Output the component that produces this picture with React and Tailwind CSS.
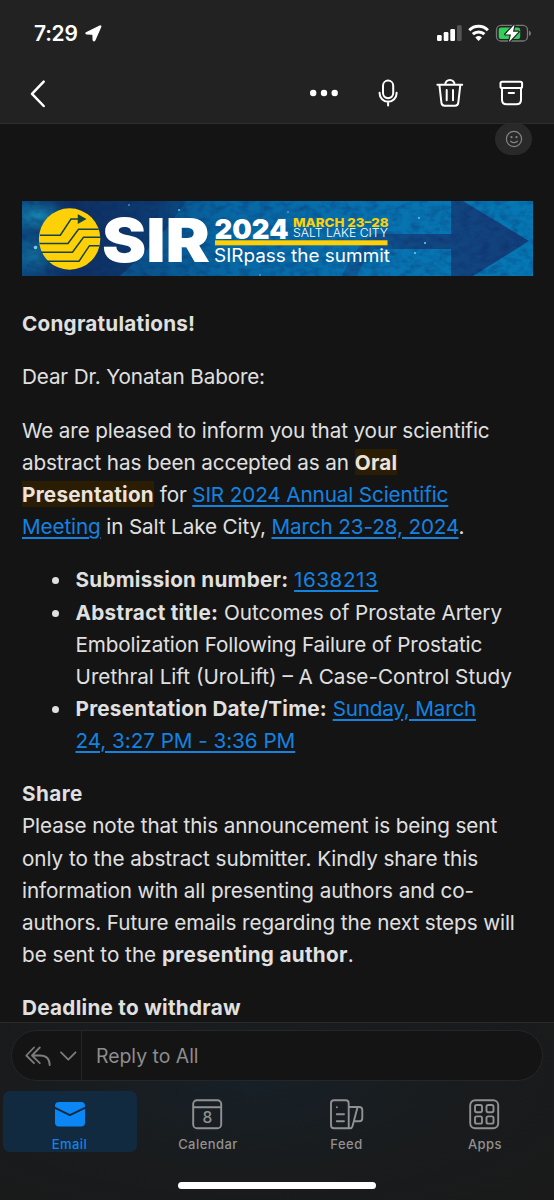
const LINK = 'text-[#1383e2] underline decoration-[1.5px] underline-offset-[3px] [text-decoration-skip-ink:auto]';

function Line({ children, t = 'tracking-[-0.1px]' }) {
  return <span className={`block h-[32.1px] whitespace-nowrap ${t}`}>{children}</span>;
}

function Link({ children, t = '' }) {
  return <a className={`${LINK} ${t}`}>{children}</a>;
}

function Bold({ children, t = 'tracking-[0.24px]' }) {
  return <b className={`font-bold ${t}`}>{children}</b>;
}

function Mark({ children }) {
  return <b className="bg-[#2b1c04] py-[0.5px] font-bold tracking-[0.26px] text-[#ece4dc]">{children}</b>;
}

function StatusBar() {
  return (
    <div className="flex h-[65px] items-center justify-between pl-[34px] pr-[22px]">
      <div className="flex items-center gap-[7px] pt-[2px] text-white">
        <span className="text-[21px] font-semibold leading-none tracking-[-0.25px]">7:29</span>
        <svg className="h-[17px] w-[17px]" viewBox="0 0 18 18">
          <path d="M1.3 8.1 15.7 1.1 Q17.3.5 16.6 2.2L10.3 16.4Q9.2 17.6 8.6 16L8.4 9.7 2 9.4Q.3 9 1.3 8.1Z" fill="#fff" stroke="#fff" strokeWidth="1.2" strokeLinejoin="round" />
        </svg>
      </div>
      <svg className="h-[20px] w-[96px]" viewBox="436 23 96 20">
        <rect x="437" y="35" width="4.7" height="6" rx="1.3" fill="#fff" />
        <rect x="443.7" y="32" width="4.7" height="9" rx="1.3" fill="#fff" />
        <rect x="450.3" y="29" width="4.7" height="12" rx="1.3" fill="#fff" />
        <rect x="457" y="25.3" width="4.7" height="15.7" rx="1.3" fill="#555" />
        <path d="M469.3 30.2a13.2 13.2 0 0 1 18.6 0M472.8 34.2a8.4 8.4 0 0 1 11.6 0" fill="none" stroke="#fff" strokeWidth="3" />
        <path d="M475.3 37.4Q478.6 34.6 481.9 37.4L478.6 41Z" fill="#fff" />
        <rect x="496.5" y="25.4" width="31" height="15.6" rx="4.6" fill="none" stroke="#777" strokeWidth="1.3" />
        <rect x="498.7" y="27.6" width="21.5" height="11.3" rx="2.5" fill="#30d158" />
        <path d="M529 30.7q2 .6 2 2.6t-2 2.6Z" fill="#777" />
        <path d="M514.5 24.5 505.3 34.4H511L509 42 518.6 31.8H513Z" fill="#fff" stroke="#222" strokeWidth="2.4" strokeLinejoin="round" paintOrder="stroke" />
      </svg>
    </div>
  );
}

function Toolbar() {
  return (
    <div className="flex h-[56px] items-center justify-between pl-[26px] pr-[26px]">
      <svg className="h-[32px] w-[24px]" viewBox="26 77 24 32" fill="none" stroke="#fff" strokeWidth="2.5" strokeLinecap="round" strokeLinejoin="round">
        <path d="M43.7 81.7 32 93.8 43.7 106" />
      </svg>
      <svg className="h-[32px] w-[220px]" viewBox="308 77 220 32" fill="none" stroke="#fff" strokeWidth="2" strokeLinecap="round" strokeLinejoin="round">
        <g fill="#fff" stroke="none">
          <circle cx="313.2" cy="93" r="3.2" />
          <circle cx="324" cy="93" r="3.2" />
          <circle cx="334.7" cy="93" r="3.2" />
        </g>
        <rect x="383" y="80.6" width="10.2" height="17.6" rx="5.1" />
        <path d="M379.6 92.8v.5a8.4 8.4 0 0 0 17 0v-.5M388.1 101.5v4" />
        <path d="M437.4 84.8h24.8M445.3 84.5a4.6 4.6 0 0 1 9.2 0M439.4 85l2 17.7q.3 3 3.2 3h10.5q2.9 0 3.2-3l2-17.7M446.7 90v10.3M453 90v10.3" />
        <rect x="500.5" y="81.8" width="21.6" height="6.3" rx="1.7" />
        <path d="M502 88.2v11.5q0 4.6 4.6 4.6h9.8q4.6 0 4.6-4.6V88.2M508.7 93h5.3" />
      </svg>
    </div>
  );
}

function Banner() {
  return (
    <svg className="block h-[75px] w-[511px]" viewBox="22 201 511 75" fontFamily="Inter, sans-serif">
      <defs>
        <linearGradient id="sea" x1="0" x2="1">
          <stop offset="0" stopColor="#0a4a7f" />
          <stop offset=".1" stopColor="#102f61" />
          <stop offset=".26" stopColor="#0c3c71" />
          <stop offset=".4" stopColor="#075c97" />
          <stop offset=".7" stopColor="#0870ac" />
          <stop offset="1" stopColor="#057ab4" />
        </linearGradient>
        <radialGradient id="glow">
          <stop offset="0" stopColor="#1a9cc4" stopOpacity=".75" />
          <stop offset="1" stopColor="#1a9cc4" stopOpacity="0" />
        </radialGradient>
        <linearGradient id="shaft" x1="0" x2="1">
          <stop offset="0" stopColor="#16306a" stopOpacity=".3" />
          <stop offset=".4" stopColor="#16306a" stopOpacity=".65" />
          <stop offset="1" stopColor="#162c66" stopOpacity=".75" />
        </linearGradient>
        <filter id="grain" x="0" y="0" width="1" height="1" colorInterpolationFilters="sRGB">
          <feTurbulence type="fractalNoise" baseFrequency=".1 .16" numOctaves="3" seed="4" />
          <feColorMatrix values="0 0 0 0 .05  0 0 0 0 .13  0 0 0 0 .36  2.2 0 0 0 -.9" />
        </filter>
      </defs>
      <rect x="22" y="201" width="511" height="75" fill="url(#sea)" />
      <path d="M186 201H533V276H120Q160 240 186 201Z" fill="#0878b4" opacity=".42" />
      <ellipse cx="38" cy="216" rx="30" ry="17" fill="url(#glow)" />
      <ellipse cx="34" cy="255" rx="24" ry="22" fill="url(#glow)" opacity=".6" />
      <path d="M374 234H451V201H463L529 241 473 276H451V249H374Q363 261 357 276H342Q356 244 374 234Z" fill="url(#shaft)" />
      <rect x="22" y="201" width="511" height="75" filter="url(#grain)" opacity=".35" />
      <g fill="#73d0eb">
        <circle cx="35.5" cy="247.5" r="1.8" /><circle cx="51" cy="262" r="1" /><circle cx="129" cy="205" r=".8" />
        <circle cx="179" cy="210" r=".9" /><circle cx="419" cy="218" r=".9" /><circle cx="425" cy="243" r="1" />
        <circle cx="415" cy="253" r="1" /><circle cx="288" cy="212" r=".8" /><circle cx="260" cy="275" r=".8" />
      </g>
      <circle cx="69.6" cy="239" r="30.7" fill="#fed007" />
      <g fill="none" stroke="#17433f" strokeWidth="1.5">
        <path d="M40 235.2H60.3L71 219H79M39.5 243.5H68L78.5 229.2H98.5M41 252.3H72.5L83.5 237.3H100.3M47 261.2H79L89.5 245.7H99.5" />
        <path d="M78.5 215.5 85 219 78.5 222.7Z" fill="#17433f" />
      </g>
      <g fill="#fff">
        <text x="102" y="262.3" fontSize="61" fontWeight="900" textLength="108" lengthAdjust="spacingAndGlyphs">SIR</text>
        <text x="214.5" y="239" fontSize="27.8" fontWeight="900" textLength="74" lengthAdjust="spacingAndGlyphs">2024</text>
        <text x="293" y="236.7" fontSize="11.8" fontWeight="300" textLength="95" lengthAdjust="spacingAndGlyphs">SALT LAKE CITY</text>
        <text x="214" y="262" fontSize="18.2" fontWeight="400" textLength="176" lengthAdjust="spacingAndGlyphs">SIRpass the summit</text>
      </g>
      <text x="293" y="227" fontSize="12.4" fontWeight="800" fill="#fed007" textLength="95.5" lengthAdjust="spacingAndGlyphs">MARCH 23–28</text>
      <rect x="215" y="240.3" width="172.5" height="5" fill="#fed007" />
    </svg>
  );
}

function Message() {
  return (
    <div className="flex flex-col gap-[21.4px] text-[20.7px] leading-[32.1px] text-[#e0e0e0]">
      <p><Line><Bold>Congratulations!</Bold></Line></p>
      <p><Line t="tracking-[-0.15px]">Dear Dr. Yonatan Babore:</Line></p>
      <p>
        <Line t="tracking-[-0.12px]">We are pleased to inform you that your scientific</Line>
        <Line t="tracking-[-0.11px]">abstract has been accepted as an <Mark>Oral</Mark></Line>
        <Line t="tracking-[-0.12px]"><Mark>Presentation</Mark> for <Link>SIR 2024 Annual Scientific</Link></Line>
        <Line t="tracking-[-0.13px]"><Link>Meeting</Link> in Salt Lake City, <Link>March 23-28, 2024</Link>.</Line>
      </p>
      <ul className="flex flex-col pl-[53.5px]">
        <Item><Line><Bold>Submission number:</Bold> <Link t="tracking-[0.5px]">1638213</Link></Line></Item>
        <Item>
          <Line t="tracking-[-0.05px]"><Bold t="tracking-[0.31px]">Abstract title:</Bold> Outcomes of Prostate Artery</Line>
          <Line t="tracking-[-0.13px]">Embolization Following Failure of Prostatic</Line>
          <Line t="tracking-[0px]">Urethral Lift (UroLift) – A Case-Control Study</Line>
        </Item>
        <Item>
          <Line t="tracking-[-0.2px]"><Bold>Presentation Date/Time:</Bold> <Link>Sunday, March</Link></Line>
          <Line t="tracking-[-0.05px]"><Link>24, 3:27 PM - 3:36 PM</Link></Line>
        </Item>
      </ul>
      <p>
        <Line><Bold t="tracking-[0.4px]">Share</Bold></Line>
        <Line>Please note that this announcement is being sent</Line>
        <Line t="tracking-[-0.05px]">only to the abstract submitter. Kindly share this</Line>
        <Line>information with all presenting authors and co-</Line>
        <Line>authors. Future emails regarding the next steps will</Line>
        <Line t="tracking-[0px]">be sent to the <Bold t="tracking-[0.3px]">presenting author</Bold>.</Line>
      </p>
      <p><Line><Bold t="tracking-[0.28px]">Deadline to withdraw</Bold></Line></p>
    </div>
  );
}

function Item({ children }) {
  return (
    <li className="relative">
      <span className="absolute -left-[23.5px] top-[13px] h-[7px] w-[7px] rounded-full bg-[#e0e0e0]" />
      {children}
    </li>
  );
}

function Tab({ label, active, children }) {
  return (
    <div className={`flex h-[61px] w-[134px] flex-col items-center rounded-[7px] pt-[7px] ${active ? 'bg-[#122a40] text-[#1683e4]' : 'text-[#919191]'}`}>
      <svg className="mr-[2px] h-[34px] w-[36px] shrink-0" viewBox="0 0 36 34" fill="none" stroke="currentColor" strokeWidth="1.9" strokeLinecap="round" strokeLinejoin="round">{children}</svg>
      <span className="mt-[3px] shrink-0 text-[13px] font-medium leading-[18px] tracking-[0.45px]">{label}</span>
    </div>
  );
}

function Footer() {
  return (
    <footer className="flex h-[178px] shrink-0 flex-col border-t border-[#2a2a2a] bg-[radial-gradient(ellipse_at_45%_35%,#172027_0%,#191b1c_55%,#1a1a1a_100%)]">
      <div className="mx-[11px] mt-[7px] flex h-[51px] shrink-0 items-center rounded-full border border-[#242627] bg-[#141414]">
        <svg className="h-[49px] w-[69px] shrink-0" viewBox="12 1031 69 49" fill="none" stroke="#7c7c7c" strokeWidth="1.8" strokeLinecap="round" strokeLinejoin="round">
          <path d="M34 1047.5 26.3 1055.5 34 1063.2M39.8 1047.5 32 1055.5 39.8 1063.2M32.5 1055.5H40Q49.7 1055.5 49.7 1065.2" />
          <path d="M61 1052.3 68.3 1059.7 75.5 1052.3" />
        </svg>
        <div className="h-full w-px bg-[#242627]" />
        <span className="ml-[14px] pt-[2px] text-[19.4px] leading-none text-[#8d8d8d]">Reply to All</span>
      </div>
      <div className="mt-[10px] flex shrink-0 gap-[4.5px] pl-[2.5px]">
        <Tab label="Email" active>
          <rect x="4" y="4" width="30" height="24.5" rx="4" fill="#0b86f5" stroke="none" />
          <path d="M4 9.8 18.9 17.1 34 9.8" stroke="#122a40" strokeWidth="2" />
        </Tab>
        <Tab label="Calendar">
          <rect x="4.2" y="2.3" width="28" height="28" rx="3.8" />
          <path d="M4.5 9.2H32" />
          <text x="18.3" y="24.5" fontSize="15.5" textAnchor="middle" fill="currentColor" stroke="none" fontWeight="500">8</text>
        </Tab>
        <Tab label="Feed">
          <path d="M6 2.3H17.7Q20.7 2.3 20.7 5.3V30.3H6Q3 30.3 3 27.3V5.3Q3 2.3 6 2.3ZM20.7 9H31Q34.3 9 34.3 12V20.3Q34.3 23.3 31.3 23.3H27.3M29.5 9.3 24.5 28.3Q24 30.3 22 30.3H18M8.8 16.2H16M8.8 23.3H16M8.9 9.2V9.3" />
        </Tab>
        <Tab label="Apps">
          <rect x="4.2" y="2.3" width="28" height="28" rx="5" />
          <rect x="9" y="7" width="7" height="7.2" rx="1.7" />
          <rect x="20.5" y="7" width="7" height="7.2" rx="1.7" />
          <rect x="9" y="18.4" width="7" height="7.2" rx="1.7" />
          <rect x="20.5" y="18.4" width="7" height="7.2" rx="1.7" />
        </Tab>
      </div>
      <div className="mt-[30px] h-[7px] w-[198px] shrink-0 self-center rounded-full bg-white" />
    </footer>
  );
}

export default function App() {
  return (
    <div className="flex h-[1200px] w-[554px] flex-col overflow-hidden bg-[#141414] font-['Inter',sans-serif]">
      <header className="h-[124px] shrink-0 border-b border-[#2d2d2d] bg-[#222222]">
        <StatusBar />
        <Toolbar />
      </header>
      <main className="min-h-0 flex-1 overflow-hidden pl-[21.5px]">
        <div className="mr-[22px] flex h-[31px] justify-end">
          <div className="-mt-[1px] flex h-[32px] w-[37px] items-center justify-center rounded-full bg-[#292929]">
            <svg className="h-[18px] w-[18px]" viewBox="0 0 18 18" fill="none" stroke="#858585" strokeWidth="1.2" strokeLinecap="round">
              <circle cx="9" cy="9" r="7.6" />
              <path d="M5.6 11.2Q9 14 12.4 11.2" />
              <circle cx="6.5" cy="7.2" r=".5" fill="#858585" />
              <circle cx="11.5" cy="7.2" r=".5" fill="#858585" />
            </svg>
          </div>
        </div>
        <div className="mt-[46px]"><Banner /></div>
        <div className="mt-[31.7px] pl-[0.5px]"><Message /></div>
      </main>
      <Footer />
    </div>
  );
}
